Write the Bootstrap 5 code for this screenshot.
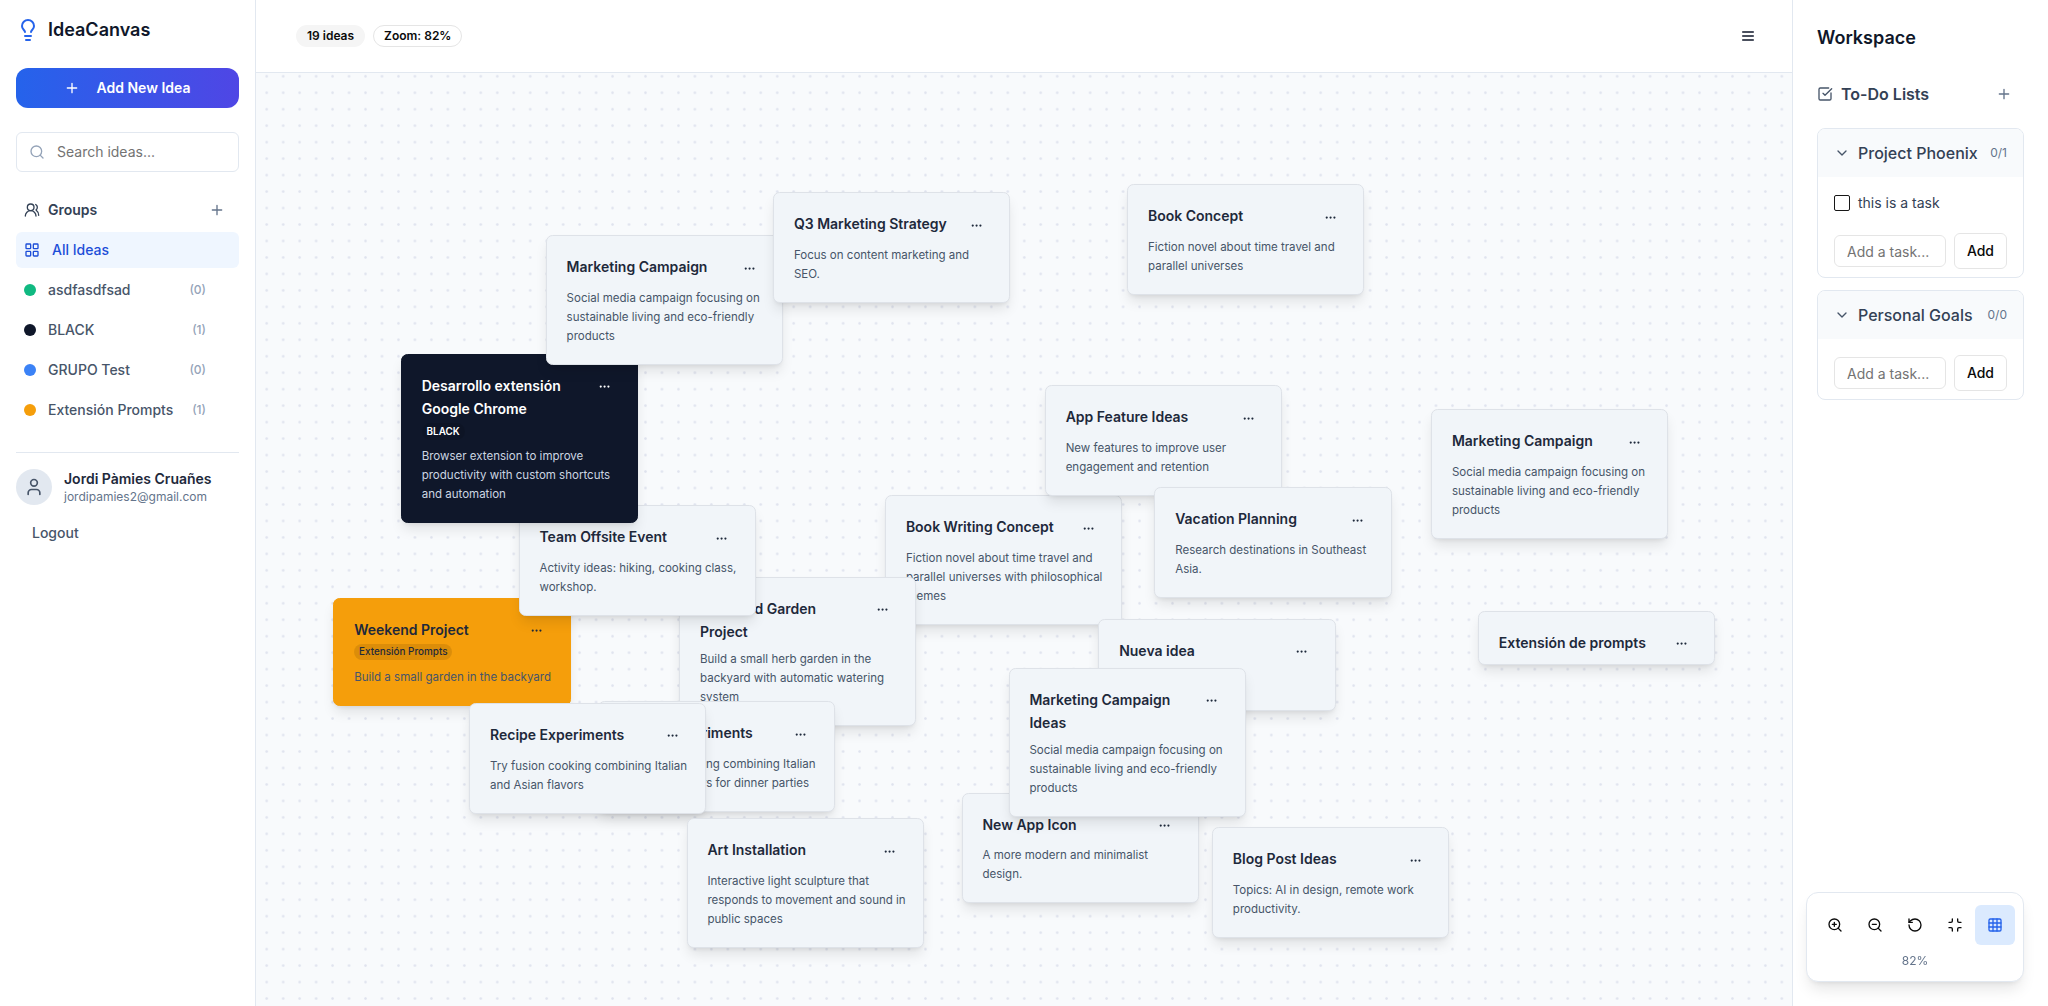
<!DOCTYPE html>
<html lang="en">
<head>
<meta charset="utf-8">
<meta name="viewport" content="width=device-width, initial-scale=1">
<title>IdeaCanvas</title>
<link href="https://cdn.jsdelivr.net/npm/bootstrap@5.3.0/dist/css/bootstrap.min.css" rel="stylesheet">
<style>
:root{--slate-50:#f8fafc;--slate-100:#f1f5f9;--slate-200:#e2e8f0;--slate-400:#94a3b8;--slate-500:#64748b;--slate-600:#475569;--slate-700:#334155;--slate-800:#1e293b;--slate-900:#0f172a}
body{font-family:Inter,"Noto Sans",sans-serif;font-size:14px;line-height:20px;color:var(--slate-900);background:#fff}
svg{fill:none;stroke:currentColor;stroke-width:2;stroke-linecap:round;stroke-linejoin:round;flex:none;width:16px;height:16px}
.plain{border:0;background:none;padding:0;display:flex;align-items:center;justify-content:center;color:inherit}
.t12{font-size:12px;line-height:16px}
.t16{font-size:16px;line-height:24px}
.t18{font-size:18px;line-height:28px}
.fw-med{font-weight:500}
.c400{color:var(--slate-400)}.c500{color:var(--slate-500)}.c600{color:var(--slate-600)}.c700{color:var(--slate-700)}

.sidebar,.workspace{flex:0 0 256px;min-width:0;background:#fff}
.sidebar{border-right:1px solid var(--slate-200);padding:16px}
.workspace{border-left:1px solid var(--slate-200);padding:24px 24px 24px 24px}
.brand-icon{width:24px;height:24px;color:#2563eb}
.btn-new{height:40px;border:0;border-radius:12px;color:#fff;background:linear-gradient(to right,#2563eb,#4f46e5);gap:16px}
.search-wrap{height:40px;border:1px solid var(--slate-200);border-radius:6px;padding:0 12px;gap:12px}
.search-wrap input,.task-input{border:0;outline:0;background:none;width:0;min-width:0;padding:0;color:inherit}
input::placeholder{color:#737373;opacity:1}
.groups-head{height:28px}
.groups-head button{width:28px;height:28px}
.nav-row{height:36px;border-radius:6px;padding:0 33px 0 8px;text-decoration:none;color:var(--slate-600)}
.nav-row.current{background:#eff6ff;color:#1d4ed8;gap:12px}
.dot{width:12px;height:12px;border-radius:50%;flex:none}
.avatar-disc{width:36px;height:36px;border-radius:50%;background:var(--slate-200);color:var(--slate-600)}
.avatar-disc svg{width:20px;height:20px}
.account{border-top:1px solid var(--slate-200);padding-top:16px}
.btn-logout{height:24px}
.user-name{color:var(--slate-800)}

.topbar{height:73px;border-bottom:1px solid var(--slate-200);padding:0 36px 0 40px;background:#fff}
.chip{border:1px solid transparent;border-radius:11px;padding:2px 10px;font-weight:600;color:#0a0a0a}
.chip-fill{background:#f5f5f5}
.chip-line{border-color:#e5e5e5}

.board{background:var(--slate-50)}
/* The board content is authored at 100% and shown at the current zoom level. */
.board-layer{position:absolute;inset:0;zoom:.8235;background-image:radial-gradient(#dfe3ee 1px,transparent 2px);background-size:20px 20px;background-position:3px 14px}
.idea{position:absolute;width:288px;border:1px solid #dee2e8;border-radius:8px;background:var(--slate-100);color:var(--slate-800);box-shadow:0 10px 15px -3px rgba(0,0,0,.1),0 4px 6px -4px rgba(0,0,0,.1)}
.idea header{display:flex;justify-content:space-between;align-items:flex-start;padding:23px 24px 9px;gap:8px}
.idea h3{font-size:17px;line-height:28px;font-weight:600;margin:0}
.idea p{margin:0;padding:0 16px 22px 24px;font-size:14px;line-height:23px;min-height:45px;color:var(--slate-600)}
.idea .menu-btn{width:32px;height:32px;flex:none}
.tag-pill{display:inline-block;margin-top:4px;border-radius:10px;padding:2px 6px;font-size:12px;line-height:16px;background:rgba(0,0,0,.1);font-weight:500;vertical-align:top}
.idea.dark{background:var(--slate-900);border-color:var(--slate-900);color:#fff}
.idea.dark p{color:#cbd5e1}
.idea.dark .tag-pill{font-weight:600}
.idea.amber{background:#f59e0b;border-color:#f59e0b}

.todo-title{height:36px}
.todo-title button{width:32px;height:32px}
.todo{border:1px solid var(--slate-200);border-radius:8px;overflow:hidden}
.todo-head{background:var(--slate-50);height:48px;padding:0 16px}
.todo-body{padding:16px 16px 8px}
.task-row{margin-bottom:20px}
.task-row input{appearance:none;width:16px;height:16px;border:1px solid #171717;border-radius:2px;margin:0;flex:none}
.task-input{flex:1 1 0;height:32px;border:1px solid #e5e5e5;border-radius:6px;padding:0 12px}
.btn-add{height:36px;border:1px solid #e5e5e5;border-radius:6px;background:#fff;padding:0 12px;color:#0a0a0a;font-weight:500}
.zoom-panel{position:fixed;right:24px;bottom:24px;background:#fff;border:1px solid var(--slate-200);border-radius:12px;padding:12px 8px;box-shadow:0 10px 15px -3px rgba(0,0,0,.1),0 4px 6px -4px rgba(0,0,0,.1);color:#0a0a0a}
.zoom-panel button{width:40px;height:40px;border-radius:6px}
.zoom-panel button.on{background:#dbeafe;color:#2563eb}
</style>
<script src="https://cdn.jsdelivr.net/npm/bootstrap@5.3.0/dist/js/bootstrap.bundle.min.js"></script>
</head>
<body>
<svg class="d-none" aria-hidden="true">
<symbol id="plus" viewBox="0 0 24 24"><path d="M5 12h14M12 5v14"/></symbol>
<symbol id="more" viewBox="0 0 24 24"><circle cx="12" cy="12" r="1"/><circle cx="19" cy="12" r="1"/><circle cx="5" cy="12" r="1"/></symbol>
<symbol id="chev" viewBox="0 0 24 24"><path d="m6 9 6 6 6-6"/></symbol>
</svg>
<div class="d-flex vh-100 overflow-hidden">

<aside class="sidebar d-flex flex-column">
  <div class="d-flex align-items-center gap-2 mb-4">
    <svg class="brand-icon" viewBox="0 0 24 24"><path d="M15 14c.2-1 .7-1.700 1.500-2.500 1-.9 1.500-2.200 1.500-3.500A6 6 0 0 0 6 8c0 1 .2 2.200 1.500 3.500.7.7 1.300 1.500 1.500 2.500M9 18h6M10 22h4"/></svg>
    <span class="t18 fw-semibold">IdeaCanvas</span>
  </div>
  <button class="btn-new d-flex align-items-center justify-content-center fw-semibold mb-4"><svg><use href="#plus"/></svg>Add New Idea</button>
  <label class="search-wrap d-flex align-items-center mb-4">
    <svg class="c400" viewBox="0 0 24 24"><circle cx="11" cy="11" r="8"/><path d="m21 21-4.300-4.300"/></svg>
    <input type="text" class="flex-grow-1" placeholder="Search ideas..." aria-label="Search ideas">
  </label>
  <div class="groups-head d-flex align-items-center ps-2 pe-2 c700 mb-1">
    <svg viewBox="0 0 24 24"><path d="M18 21a8 8 0 0 0-16 0"/><circle cx="10" cy="8" r="5"/><path d="M22 20c0-3.370-2-6.500-4-8a5 5 0 0 0-.45-8.300"/></svg>
    <span class="fw-semibold ms-2">Groups</span>
    <button class="plain ms-auto c500" aria-label="Add group"><svg><use href="#plus"/></svg></button>
  </div>
  <nav class="d-flex flex-column gap-1 mt-1" aria-label="Groups">
    <a href="#" class="nav-row current d-flex align-items-center fw-med">
      <svg viewBox="0 0 24 24"><rect x="3" y="3" width="7" height="7" rx="1"/><rect x="14" y="3" width="7" height="7" rx="1"/><rect x="14" y="14" width="7" height="7" rx="1"/><rect x="3" y="14" width="7" height="7" rx="1"/></svg>All Ideas</a>
    <a href="#" class="nav-row d-flex align-items-center fw-med"><span class="dot me-2" style="background:#10b981"></span><span class="ms-1">asdfasdfsad</span><span class="t12 c400 ms-auto">(0)</span></a>
    <a href="#" class="nav-row d-flex align-items-center fw-med"><span class="dot me-2" style="background:#0f172a"></span><span class="ms-1">BLACK</span><span class="t12 c400 ms-auto">(1)</span></a>
    <a href="#" class="nav-row d-flex align-items-center fw-med"><span class="dot me-2" style="background:#3b82f6"></span><span class="ms-1">GRUPO Test</span><span class="t12 c400 ms-auto">(0)</span></a>
    <a href="#" class="nav-row d-flex align-items-center fw-med"><span class="dot me-2" style="background:#f59e0b"></span><span class="ms-1 text-nowrap">Extensión Prompts</span><span class="t12 c400 ms-auto">(1)</span></a>
  </nav>
  <div class="account mt-4">
    <div class="d-flex align-items-center gap-2">
      <span class="avatar-disc d-flex align-items-center justify-content-center me-1"><svg viewBox="0 0 24 24"><path d="M19 21v-2a4 4 0 0 0-4-4H9a4 4 0 0 0-4 4v2"/><circle cx="12" cy="7" r="4"/></svg></span>
      <div><div class="fw-semibold user-name">Jordi Pàmies Cruañes</div><div class="t12 c500">jordipamies2@gmail.com</div></div>
    </div>
    <button class="plain btn-logout fw-med c600 ms-3 mt-3">Logout</button>
  </div>
</aside>

<main class="flex-grow-1 d-flex flex-column overflow-hidden">
  <div class="topbar d-flex align-items-center gap-2">
    <span class="chip chip-fill t12">19 ideas</span>
    <span class="chip chip-line t12">Zoom: 82%</span>
    <button class="plain ms-auto" aria-label="Menu"><svg viewBox="0 0 24 24" stroke="#0a0a0a"><path d="M4 12h16M4 6h16M4 18h16"/></svg></button>
  </div>
  <div class="board flex-grow-1 position-relative overflow-hidden">
   <div class="board-layer">
    <article class="idea" style="left:1058px;top:135px"><header><h3>Book Concept</h3><button class="plain menu-btn" aria-label="More"><svg><use href="#more"/></svg></button></header><p>Fiction novel about time travel and parallel universes</p></article>
    <article class="idea" style="left:1427px;top:408px"><header><h3>Marketing Campaign</h3><button class="plain menu-btn" aria-label="More"><svg><use href="#more"/></svg></button></header><p>Social media campaign focusing on sustainable living and eco-friendly products</p></article>
    <article class="idea" style="left:1484px;top:653px"><header><h3>Extensión de prompts</h3><button class="plain menu-btn" aria-label="More"><svg><use href="#more"/></svg></button></header></article>
    <article class="idea" style="left:764px;top:513px"><header><h3>Book Writing Concept</h3><button class="plain menu-btn" aria-label="More"><svg><use href="#more"/></svg></button></header><p>Fiction novel about time travel and parallel universes with philosophical themes</p></article>
    <article class="idea" style="left:958px;top:379px"><header><h3>App Feature Ideas</h3><button class="plain menu-btn" aria-label="More"><svg><use href="#more"/></svg></button></header><p>New features to improve user engagement and retention</p></article>
    <article class="idea" style="left:1091px;top:503px"><header><h3>Vacation Planning</h3><button class="plain menu-btn" aria-label="More"><svg><use href="#more"/></svg></button></header><p>Research destinations in Southeast Asia.</p></article>
    <article class="idea" style="left:1023px;top:663px"><header><h3>Nueva idea</h3><button class="plain menu-btn" aria-label="More"><svg><use href="#more"/></svg></button></header><p></p></article>
    <article class="idea" style="left:857px;top:874px"><header><h3>New App Icon</h3><button class="plain menu-btn" aria-label="More"><svg><use href="#more"/></svg></button></header><p>A more modern and minimalist design.</p></article>
    <article class="idea" style="left:914px;top:722px"><header><h3>Marketing Campaign Ideas</h3><button class="plain menu-btn" aria-label="More"><svg><use href="#more"/></svg></button></header><p>Social media campaign focusing on sustainable living and eco-friendly products</p></article>
    <article class="idea" style="left:1161px;top:916px"><header><h3>Blog Post Ideas</h3><button class="plain menu-btn" aria-label="More"><svg><use href="#more"/></svg></button></header><p>Topics: AI in design, remote work productivity.</p></article>
    <article class="idea" style="left:514px;top:612px"><header><h3>Weekend Garden Project</h3><button class="plain menu-btn" aria-label="More"><svg><use href="#more"/></svg></button></header><p>Build a small herb garden in the backyard with automatic watering system</p></article>
    <article class="idea amber" style="left:94px;top:637px"><header><div><h3>Weekend Project</h3><span class="tag-pill">Extensión Prompts</span></div><button class="plain menu-btn" aria-label="More"><svg><use href="#more"/></svg></button></header><p>Build a small garden in the backyard</p></article>
    <article class="idea" style="left:319px;top:525px"><header><h3>Team Offsite Event</h3><button class="plain menu-btn" aria-label="More"><svg><use href="#more"/></svg></button></header><p>Activity ideas: hiking, cooking class, workshop.</p></article>
    <article class="idea dark" style="left:176px;top:341px"><header><div><h3>Desarrollo extensión Google Chrome</h3><span class="tag-pill">BLACK</span></div><button class="plain menu-btn" aria-label="More"><svg><use href="#more"/></svg></button></header><p>Browser extension to improve productivity with custom shortcuts and automation</p></article>
    <article class="idea" style="left:352px;top:197px"><header><h3>Marketing Campaign</h3><button class="plain menu-btn" aria-label="More"><svg><use href="#more"/></svg></button></header><p>Social media campaign focusing on sustainable living and eco-friendly products</p></article>
    <article class="idea" style="left:628px;top:145px"><header><h3>Q3 Marketing Strategy</h3><button class="plain menu-btn" aria-label="More"><svg><use href="#more"/></svg></button></header><p>Focus on content marketing and SEO.</p></article>
    <article class="idea" style="left:415px;top:763px"><header><h3>Recipe Experiments</h3><button class="plain menu-btn" aria-label="More"><svg><use href="#more"/></svg></button></header><p>Try fusion cooking combining Italian and Asian flavors for dinner parties</p></article>
    <article class="idea" style="left:259px;top:765px"><header><h3>Recipe Experiments</h3><button class="plain menu-btn" aria-label="More"><svg><use href="#more"/></svg></button></header><p>Try fusion cooking combining Italian and Asian flavors</p></article>
    <article class="idea" style="left:523px;top:905px"><header><h3>Art Installation</h3><button class="plain menu-btn" aria-label="More"><svg><use href="#more"/></svg></button></header><p>Interactive light sculpture that responds to movement and sound in public spaces</p></article>
   </div>
  </div>
</main>

<aside class="workspace">
  <div class="t18 fw-semibold mb-4">Workspace</div>
  <div class="todo-title d-flex align-items-center c700 mb-3">
    <svg class="c600" viewBox="0 0 24 24"><path d="M21 10.500V19a2 2 0 0 1-2 2H5a2 2 0 0 1-2-2V5a2 2 0 0 1 2-2h12.500"/><path d="m9 11 3 3L22 4"/></svg>
    <span class="t16 fw-semibold ms-2">To-Do Lists</span>
    <button class="plain ms-auto c500 me-1" aria-label="Add list"><svg><use href="#plus"/></svg></button>
  </div>
  <div class="d-flex flex-column gap-2">
  <section class="todo mb-1">
    <div class="todo-head d-flex align-items-center gap-2 c700"><svg class="c600"><use href="#chev"/></svg><span class="t16 fw-med text-nowrap">Project Phoenix</span><span class="t12 c500 ms-auto">0/1</span></div>
    <div class="todo-body">
      <label class="task-row d-flex align-items-center gap-2 c700"><input type="checkbox">this is a task</label>
      <div class="d-flex align-items-center gap-2"><input class="task-input" type="text" placeholder="Add a task..." aria-label="Add a task to Project Phoenix"><button class="btn-add">Add</button></div>
    </div>
  </section>
  <section class="todo">
    <div class="todo-head d-flex align-items-center gap-2 c700"><svg class="c600"><use href="#chev"/></svg><span class="t16 fw-med text-nowrap">Personal Goals</span><span class="t12 c500 ms-auto">0/0</span></div>
    <div class="todo-body">
      <div class="d-flex align-items-center gap-2"><input class="task-input" type="text" placeholder="Add a task..." aria-label="Add a task to Personal Goals"><button class="btn-add">Add</button></div>
    </div>
  </section>
  </div>
</aside>
</div>

<div class="zoom-panel">
  <div class="d-flex mb-2">
    <button class="plain" aria-label="Zoom in"><svg viewBox="0 0 24 24"><circle cx="11" cy="11" r="8"/><path d="m21 21-4.350-4.350M11 8v6M8 11h6"/></svg></button>
    <button class="plain" aria-label="Zoom out"><svg viewBox="0 0 24 24"><circle cx="11" cy="11" r="8"/><path d="m21 21-4.350-4.350M8 11h6"/></svg></button>
    <button class="plain" aria-label="Reset view"><svg viewBox="0 0 24 24"><path d="M3 12a9 9 0 1 0 9-9 9.750 9.750 0 0 0-6.740 2.740L3 8"/><path d="M3 3v5h5"/></svg></button>
    <button class="plain" aria-label="Fit"><svg viewBox="0 0 24 24"><path d="M8 3v3a2 2 0 0 1-2 2H3M21 8h-3a2 2 0 0 1-2-2V3M3 16h3a2 2 0 0 1 2 2v3M16 21v-3a2 2 0 0 1 2-2h3"/></svg></button>
    <button class="plain on" aria-label="Toggle grid"><svg viewBox="0 0 24 24"><rect x="3" y="3" width="18" height="18" rx="2"/><path d="M3 9h18M3 15h18M9 3v18M15 3v18"/></svg></button>
  </div>
  <div class="t12 c500 text-center">82%</div>
</div>
</body>
</html>
